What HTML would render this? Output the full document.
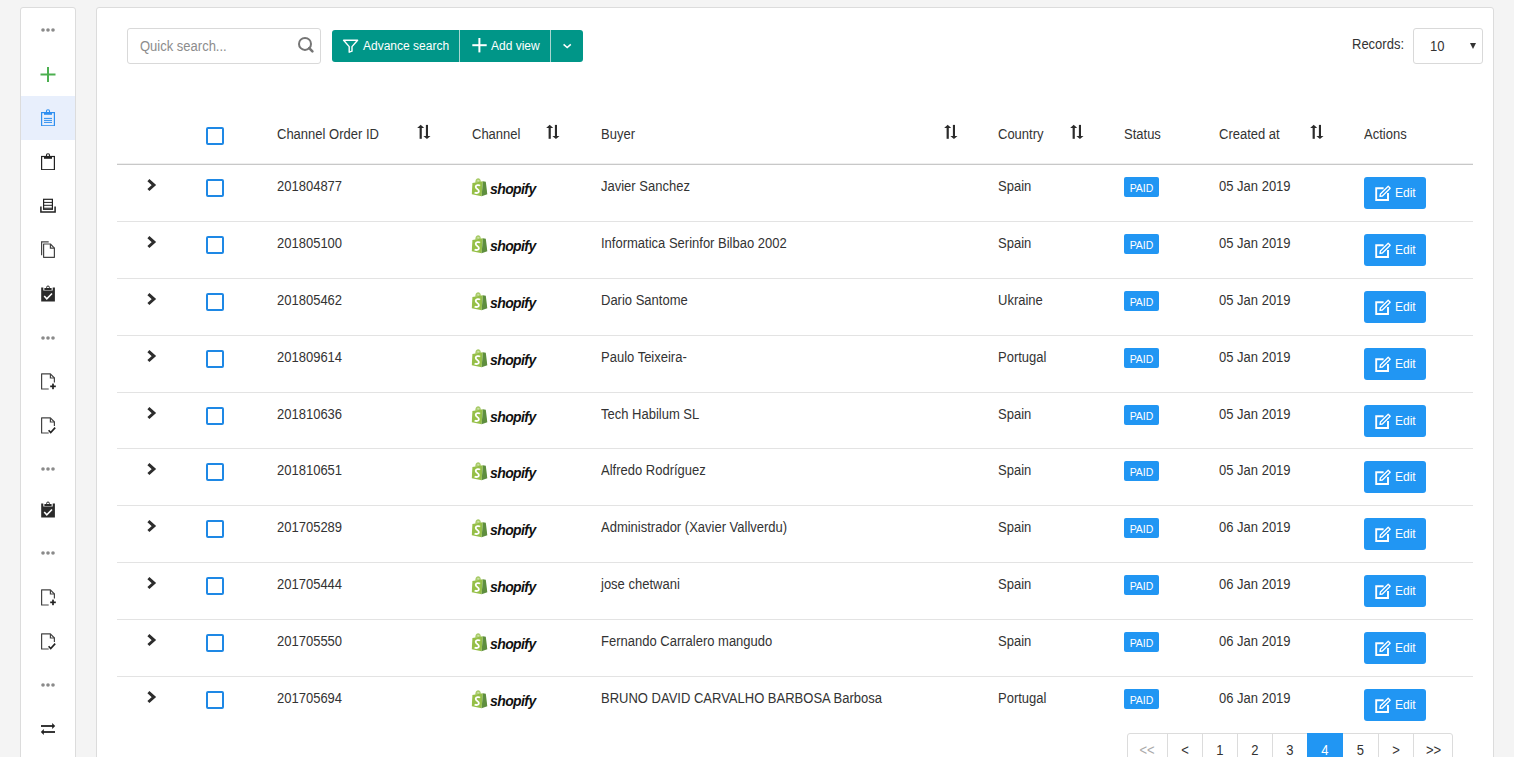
<!DOCTYPE html>
<html><head><meta charset="utf-8"><title>Orders</title>
<style>
*{margin:0;padding:0;box-sizing:border-box}
html,body{width:1514px;height:757px;overflow:hidden;background:#f4f4f4;font-family:"Liberation Sans",sans-serif;color:#333}
.sidebar{position:absolute;left:20px;top:7px;width:56px;height:800px;background:#fff;border:1px solid #dcdcdc;border-radius:3px}
.sidebar .act{position:absolute;left:0;top:88px;width:54px;height:44px;background:#e8effc}
.si{position:absolute;left:0}
.panel{position:absolute;left:96px;top:7px;width:1398px;height:800px;background:#fff;border:1px solid #dcdcdc;border-radius:3px}
.abs{position:absolute}
.search{position:absolute;left:127px;top:28px;width:194px;height:36px;border:1px solid #d9d9d9;border-radius:3px;background:#fff}
.search .ph{position:absolute;left:12px;top:10px;font-size:14px;line-height:15px;color:#8c8c8c;transform:scaleX(0.9286);transform-origin:0 0;white-space:nowrap}
.btns{position:absolute;left:332px;top:30px;width:251px;height:32px;background:#009688;border-radius:3px}
.btns .dv{position:absolute;top:0;width:1px;height:32px;background:#a8d6d1}
.btns .lbl{position:absolute;top:9px;font-size:12px;line-height:14px;color:#fff}
.rec{position:absolute;left:1352px;top:37px;font-size:14px;line-height:15px;color:#333;transform:scaleX(0.9286);transform-origin:0 0;white-space:nowrap}
.sel{position:absolute;left:1413px;top:28px;width:70px;height:36px;border:1px solid #d9d9d9;border-radius:3px;background:#fff}
.sel .v{position:absolute;left:16px;top:10px;font-size:14px;line-height:15px;color:#333;transform:scaleX(0.9286);transform-origin:0 0;white-space:nowrap}
.sel .ar{position:absolute;left:56px;top:14px;width:0;height:0;border-left:3.5px solid transparent;border-right:3.5px solid transparent;border-top:6px solid #333}
.th{position:absolute;top:127px;font-size:14px;line-height:15px;color:#333;white-space:nowrap;transform:scaleX(0.9286);transform-origin:0 0}
.sort{position:absolute;top:124px}
.hline{position:absolute;left:117px;top:164px;width:1356px;height:1px;background:#c8c8c8;box-shadow:0 -1px 0 #efefef}
.cb{position:absolute;left:206px;width:18px;height:18px;border:2px solid #1e88e5;border-radius:2px;background:#fff}
.row{position:absolute;left:0;width:1514px;height:57px}
.row .t{position:absolute;top:15px;font-size:14px;line-height:15px;color:#333;white-space:nowrap;transform:scaleX(0.9286);transform-origin:0 0}
.row .line{position:absolute;left:117px;top:57px;width:1356px;height:1px;background:#e3e3e3}
.chev{position:absolute;left:146px;top:15px}
.shop{position:absolute;left:471px;top:14px;height:20px;width:80px}
.shop .bag{position:absolute;left:0;top:0}
.shop span{position:absolute;left:19px;top:3px;font-size:14px;line-height:17px;font-weight:bold;font-style:italic;letter-spacing:-0.6px;color:#111}
.paid{position:absolute;left:1124px;top:13px;width:35px;height:20px;background:#2196f3;border-radius:2px;color:#fff;font-size:10.5px;line-height:22px;text-align:center}
.edit{position:absolute;left:1364px;top:13px;width:62px;height:32px;background:#2196f3;border-radius:3px;color:#fff}
.edit .eicon{position:absolute;left:11px;top:8px}
.edit span{position:absolute;left:31px;top:9px;font-size:12px;line-height:14px}
.pag{position:absolute;left:1127px;top:733px;height:40px;border:1px solid #dcdcdc;border-radius:3px;background:#fff}
.pg{position:absolute;top:0;height:40px;border-left:1px solid #dcdcdc;font-size:14px;line-height:15px;color:#333;text-align:center}
.pg span{position:absolute;left:0;right:0;top:9px;transform:scaleX(0.9286);transform-origin:50% 0}
</style></head><body>
<div class="sidebar"><div class="act"></div></div><svg class="si" style="top:25px" width="80" height="10" viewBox="0 0 80 10"><circle cx="43" cy="5" r="1.8" fill="#8a8a8a"/><circle cx="48" cy="5" r="1.8" fill="#8a8a8a"/><circle cx="53" cy="5" r="1.8" fill="#8a8a8a"/></svg><svg class="si" style="top:64px" width="56" height="20" viewBox="0 0 56 20"><rect x="40.5" y="9.5" width="15" height="2" fill="#4caf50"/><rect x="47" y="3" width="2" height="15" fill="#4caf50"/></svg><svg class="si" style="top:106px" width="56" height="20" viewBox="0 0 56 20"><rect x="41.6" y="6.6" width="12.8" height="13.2" fill="none" stroke="#2f8ff0" stroke-width="1.2"/><rect x="44" y="6" width="8" height="2.8" fill="#2f8ff0"/><circle cx="48" cy="5.4" r="1.6" fill="none" stroke="#2f8ff0" stroke-width="1.1"/><rect x="44" y="11.9" width="8" height="1" fill="#2f8ff0"/><rect x="44" y="13.9" width="8" height="1" fill="#2f8ff0"/><rect x="44" y="15.9" width="8" height="1" fill="#2f8ff0"/></svg><svg class="si" style="top:150px" width="56" height="20" viewBox="0 0 56 20"><rect x="41.6" y="6.5" width="12.8" height="13.2" fill="none" stroke="#222" stroke-width="1.2"/><rect x="44" y="6" width="8" height="2.8" fill="#222"/><circle cx="48" cy="5.4" r="1.6" fill="none" stroke="#222" stroke-width="1.1"/></svg><svg class="si" style="top:194px" width="56" height="20" viewBox="0 0 56 20"><rect x="43.6" y="5.3" width="8.8" height="10" fill="none" stroke="#222" stroke-width="1.2"/><rect x="44" y="7.9" width="8" height="1" fill="#222"/><rect x="44" y="10.8" width="8" height="1" fill="#222"/><rect x="44" y="13.7" width="8" height="1" fill="#222"/><path d="M40.9 12.6 V18 H55.1 V12.6" fill="none" stroke="#222" stroke-width="1.5"/></svg><svg class="si" style="top:238px" width="56" height="20" viewBox="0 0 56 20"><path d="M41.6 17.3 V3.9 H48.7" fill="none" stroke="#444" stroke-width="1.2"/><path d="M43.6 6 H50.4 L54.4 10.2 V19.3 H43.6 Z" fill="none" stroke="#444" stroke-width="1.2" stroke-linejoin="round"/><path d="M50.4 6 V10.2 H54.4" fill="none" stroke="#444" stroke-width="1.2"/></svg><svg class="si" style="top:282px" width="56" height="20" viewBox="0 0 56 20"><path d="M41.2 5.6 H43.3 V8.6 H52.7 V5.6 H54.9 V19.5 H41.2 Z" fill="#2a2a2a"/><rect x="44.4" y="6" width="7.2" height="2.1" fill="#2a2a2a"/><circle cx="48" cy="5.4" r="1.4" fill="none" stroke="#2a2a2a" stroke-width="1"/><path d="M44.2 14 L46.8 16.8 L52 11.5" fill="none" stroke="#fff" stroke-width="1.6"/></svg><svg class="si" style="top:333px" width="80" height="10" viewBox="0 0 80 10"><circle cx="43" cy="5" r="1.8" fill="#8a8a8a"/><circle cx="48" cy="5" r="1.8" fill="#8a8a8a"/><circle cx="53" cy="5" r="1.8" fill="#8a8a8a"/></svg><svg class="si" style="top:370px" width="56" height="20" viewBox="0 0 56 20"><path d="M48.7 19 H41.6 V3.9 H50.4 L54.4 8 V12.4" fill="none" stroke="#444" stroke-width="1.2" stroke-linejoin="round"/><path d="M50.4 3.9 V8 H54.4" fill="none" stroke="#444" stroke-width="1.2"/><rect x="50.2" y="15.5" width="5.6" height="1.7" fill="#222"/><rect x="52.15" y="13.6" width="1.7" height="5.6" fill="#222"/></svg><svg class="si" style="top:414px" width="56" height="20" viewBox="0 0 56 20"><path d="M48.7 19 H41.6 V3.9 H50.4 L54.4 8 V12" fill="none" stroke="#444" stroke-width="1.2" stroke-linejoin="round"/><path d="M50.4 3.9 V8 H54.4" fill="none" stroke="#444" stroke-width="1.2"/><path d="M48.6 16.3 L50.7 18.6 L55.2 13.6" fill="none" stroke="#222" stroke-width="1.6"/></svg><svg class="si" style="top:464px" width="80" height="10" viewBox="0 0 80 10"><circle cx="43" cy="5" r="1.8" fill="#8a8a8a"/><circle cx="48" cy="5" r="1.8" fill="#8a8a8a"/><circle cx="53" cy="5" r="1.8" fill="#8a8a8a"/></svg><svg class="si" style="top:498px" width="56" height="20" viewBox="0 0 56 20"><path d="M41.2 5.6 H43.3 V8.6 H52.7 V5.6 H54.9 V19.5 H41.2 Z" fill="#2a2a2a"/><rect x="44.4" y="6" width="7.2" height="2.1" fill="#2a2a2a"/><circle cx="48" cy="5.4" r="1.4" fill="none" stroke="#2a2a2a" stroke-width="1"/><path d="M44.2 14 L46.8 16.8 L52 11.5" fill="none" stroke="#fff" stroke-width="1.6"/></svg><svg class="si" style="top:548px" width="80" height="10" viewBox="0 0 80 10"><circle cx="43" cy="5" r="1.8" fill="#8a8a8a"/><circle cx="48" cy="5" r="1.8" fill="#8a8a8a"/><circle cx="53" cy="5" r="1.8" fill="#8a8a8a"/></svg><svg class="si" style="top:586px" width="56" height="20" viewBox="0 0 56 20"><path d="M48.7 19 H41.6 V3.9 H50.4 L54.4 8 V12.4" fill="none" stroke="#444" stroke-width="1.2" stroke-linejoin="round"/><path d="M50.4 3.9 V8 H54.4" fill="none" stroke="#444" stroke-width="1.2"/><rect x="50.2" y="15.5" width="5.6" height="1.7" fill="#222"/><rect x="52.15" y="13.6" width="1.7" height="5.6" fill="#222"/></svg><svg class="si" style="top:630px" width="56" height="20" viewBox="0 0 56 20"><path d="M48.7 19 H41.6 V3.9 H50.4 L54.4 8 V12" fill="none" stroke="#444" stroke-width="1.2" stroke-linejoin="round"/><path d="M50.4 3.9 V8 H54.4" fill="none" stroke="#444" stroke-width="1.2"/><path d="M48.6 16.3 L50.7 18.6 L55.2 13.6" fill="none" stroke="#222" stroke-width="1.6"/></svg><svg class="si" style="top:680px" width="80" height="10" viewBox="0 0 80 10"><circle cx="43" cy="5" r="1.8" fill="#8a8a8a"/><circle cx="48" cy="5" r="1.8" fill="#8a8a8a"/><circle cx="53" cy="5" r="1.8" fill="#8a8a8a"/></svg><svg class="si" style="top:716px" width="56" height="20" viewBox="0 0 56 20"><rect x="41" y="9.1" width="12" height="1.8" fill="#222"/><path d="M52.2 7 L55.2 10 L52.2 13 Z" fill="#222"/><rect x="43" y="15.1" width="12" height="1.8" fill="#222"/><path d="M43.8 13 L40.8 16 L43.8 19 Z" fill="#222"/></svg>
<div class="panel"></div>
<div class="search"><div class="ph">Quick search...</div>
<svg class="abs" style="left:168px;top:6px" width="20" height="20" viewBox="0 0 20 20"><circle cx="9.0" cy="8.9" r="6.0" fill="none" stroke="#757575" stroke-width="2"/><path d="M13.2 13.1 L16.4 16.3" stroke="#757575" stroke-width="2.6" stroke-linecap="round"/></svg>
</div>
<div class="btns">
<svg class="abs" style="left:10px;top:9px" width="17" height="14" viewBox="0 0 17 14"><path d="M1.6 1.2 H15.6 L10 7.6 V12.2 L7.2 13.2 V7.6 Z" fill="none" stroke="#fff" stroke-width="1.4" stroke-linejoin="round"/></svg>
<div class="lbl" style="left:31px">Advance search</div>
<div class="dv" style="left:127px"></div>
<svg class="abs" style="left:140px;top:8px" width="15" height="15" viewBox="0 0 15 15"><rect x="0.3" y="6.2" width="14.4" height="2" fill="#fff"/><rect x="6.4" y="0" width="2" height="14.4" fill="#fff"/></svg>
<div class="lbl" style="left:159px">Add view</div>
<div class="dv" style="left:218px"></div>
<svg class="abs" style="left:230px;top:13px" width="10" height="6" viewBox="0 0 10 6"><path d="M1.6 1.4 L5.2 4.6 L8.8 1.4" fill="none" stroke="#fff" stroke-width="1.5"/></svg>
</div>
<div class="rec">Records:</div>
<div class="sel"><div class="v">10</div><div class="ar"></div></div>

<div class="cb" style="top:127px"></div>
<div class="th" style="left:277px">Channel Order ID</div>
<div class="th" style="left:472px">Channel</div>
<div class="th" style="left:601px">Buyer</div>
<div class="th" style="left:998px">Country</div>
<div class="th" style="left:1124px">Status</div>
<div class="th" style="left:1219px">Created at</div>
<div class="th" style="left:1364px">Actions</div>
<svg class="sort" style="left:417px" width="14" height="16" viewBox="0 0 14 16"><path d="M0.2 4 L3.7 0.8 L7.2 4 Z" fill="#2b2b2b"/><rect x="2.6" y="3.6" width="2.2" height="11.2" fill="#2b2b2b"/><rect x="8.9" y="0.9" width="2.1" height="11.4" fill="#2b2b2b"/><path d="M6.4 12 L13.5 12 L9.95 15.1 Z" fill="#2b2b2b"/></svg><svg class="sort" style="left:546px" width="14" height="16" viewBox="0 0 14 16"><path d="M0.2 4 L3.7 0.8 L7.2 4 Z" fill="#2b2b2b"/><rect x="2.6" y="3.6" width="2.2" height="11.2" fill="#2b2b2b"/><rect x="8.9" y="0.9" width="2.1" height="11.4" fill="#2b2b2b"/><path d="M6.4 12 L13.5 12 L9.95 15.1 Z" fill="#2b2b2b"/></svg><svg class="sort" style="left:944px" width="14" height="16" viewBox="0 0 14 16"><path d="M0.2 4 L3.7 0.8 L7.2 4 Z" fill="#2b2b2b"/><rect x="2.6" y="3.6" width="2.2" height="11.2" fill="#2b2b2b"/><rect x="8.9" y="0.9" width="2.1" height="11.4" fill="#2b2b2b"/><path d="M6.4 12 L13.5 12 L9.95 15.1 Z" fill="#2b2b2b"/></svg><svg class="sort" style="left:1070px" width="14" height="16" viewBox="0 0 14 16"><path d="M0.2 4 L3.7 0.8 L7.2 4 Z" fill="#2b2b2b"/><rect x="2.6" y="3.6" width="2.2" height="11.2" fill="#2b2b2b"/><rect x="8.9" y="0.9" width="2.1" height="11.4" fill="#2b2b2b"/><path d="M6.4 12 L13.5 12 L9.95 15.1 Z" fill="#2b2b2b"/></svg><svg class="sort" style="left:1310px" width="14" height="16" viewBox="0 0 14 16"><path d="M0.2 4 L3.7 0.8 L7.2 4 Z" fill="#2b2b2b"/><rect x="2.6" y="3.6" width="2.2" height="11.2" fill="#2b2b2b"/><rect x="8.9" y="0.9" width="2.1" height="11.4" fill="#2b2b2b"/><path d="M6.4 12 L13.5 12 L9.95 15.1 Z" fill="#2b2b2b"/></svg>
<div class="hline"></div>
<div class="row" style="top:164px"><svg class="chev" width="12" height="14" viewBox="0 0 12 14"><path d="M2.4 1.2 L7.9 6.1 L2.4 11" fill="none" stroke="#2d2d2d" stroke-width="3" stroke-linejoin="miter" stroke-miterlimit="4"/></svg><div class="cb" style="top:15px"></div><div class="t" style="left:277px">201804877</div><div class="shop"><svg class="bag" width="18" height="20" viewBox="0 0 18 20"><path d="M4.2 4.8 C4.2 1.6 5.6 0.3 7.2 0.3 C8.8 0.3 9.8 1.6 9.8 4 Z" fill="#a9cc6a"/><ellipse cx="7.3" cy="2.8" rx="1.3" ry="0.6" fill="#dcebc4"/><path d="M1.4 4.9 L11.9 3.3 L10.6 18.2 L0.8 16.3 Z" fill="#95bf47"/><path d="M11.9 3.3 L14.8 3.8 L16.3 16.3 L10.6 18.2 Z" fill="#5e8e3e"/><path d="M9.0 7.7 C8.0 6.8 4.8 6.7 4.7 8.9 C4.6 10.9 8.0 10.9 7.9 13.1 C7.8 15.2 5.0 15.4 3.6 14.5" fill="none" stroke="#fff" stroke-width="1.8"/></svg><span>shopify</span></div><div class="t" style="left:601px">Javier Sanchez</div><div class="t" style="left:998px">Spain</div><div class="paid">PAID</div><div class="t" style="left:1219px">05 Jan 2019</div><div class="edit"><svg class="eicon" width="16" height="16" viewBox="0 0 16 16"><path d="M8.6 3.2 H1.2 V15 H13 V8" fill="none" stroke="#fff" stroke-width="1.9"/><path d="M5 11.4 L5.4 9 L13.2 1.2 L15.2 3.2 L7.4 11 Z" fill="none" stroke="#fff" stroke-width="1.3" stroke-linejoin="round"/></svg><span>Edit</span></div><div class="line" style="top:57px"></div></div><div class="row" style="top:221px"><svg class="chev" width="12" height="14" viewBox="0 0 12 14"><path d="M2.4 1.2 L7.9 6.1 L2.4 11" fill="none" stroke="#2d2d2d" stroke-width="3" stroke-linejoin="miter" stroke-miterlimit="4"/></svg><div class="cb" style="top:15px"></div><div class="t" style="left:277px">201805100</div><div class="shop"><svg class="bag" width="18" height="20" viewBox="0 0 18 20"><path d="M4.2 4.8 C4.2 1.6 5.6 0.3 7.2 0.3 C8.8 0.3 9.8 1.6 9.8 4 Z" fill="#a9cc6a"/><ellipse cx="7.3" cy="2.8" rx="1.3" ry="0.6" fill="#dcebc4"/><path d="M1.4 4.9 L11.9 3.3 L10.6 18.2 L0.8 16.3 Z" fill="#95bf47"/><path d="M11.9 3.3 L14.8 3.8 L16.3 16.3 L10.6 18.2 Z" fill="#5e8e3e"/><path d="M9.0 7.7 C8.0 6.8 4.8 6.7 4.7 8.9 C4.6 10.9 8.0 10.9 7.9 13.1 C7.8 15.2 5.0 15.4 3.6 14.5" fill="none" stroke="#fff" stroke-width="1.8"/></svg><span>shopify</span></div><div class="t" style="left:601px">Informatica Serinfor Bilbao 2002</div><div class="t" style="left:998px">Spain</div><div class="paid">PAID</div><div class="t" style="left:1219px">05 Jan 2019</div><div class="edit"><svg class="eicon" width="16" height="16" viewBox="0 0 16 16"><path d="M8.6 3.2 H1.2 V15 H13 V8" fill="none" stroke="#fff" stroke-width="1.9"/><path d="M5 11.4 L5.4 9 L13.2 1.2 L15.2 3.2 L7.4 11 Z" fill="none" stroke="#fff" stroke-width="1.3" stroke-linejoin="round"/></svg><span>Edit</span></div><div class="line" style="top:57px"></div></div><div class="row" style="top:278px"><svg class="chev" width="12" height="14" viewBox="0 0 12 14"><path d="M2.4 1.2 L7.9 6.1 L2.4 11" fill="none" stroke="#2d2d2d" stroke-width="3" stroke-linejoin="miter" stroke-miterlimit="4"/></svg><div class="cb" style="top:15px"></div><div class="t" style="left:277px">201805462</div><div class="shop"><svg class="bag" width="18" height="20" viewBox="0 0 18 20"><path d="M4.2 4.8 C4.2 1.6 5.6 0.3 7.2 0.3 C8.8 0.3 9.8 1.6 9.8 4 Z" fill="#a9cc6a"/><ellipse cx="7.3" cy="2.8" rx="1.3" ry="0.6" fill="#dcebc4"/><path d="M1.4 4.9 L11.9 3.3 L10.6 18.2 L0.8 16.3 Z" fill="#95bf47"/><path d="M11.9 3.3 L14.8 3.8 L16.3 16.3 L10.6 18.2 Z" fill="#5e8e3e"/><path d="M9.0 7.7 C8.0 6.8 4.8 6.7 4.7 8.9 C4.6 10.9 8.0 10.9 7.9 13.1 C7.8 15.2 5.0 15.4 3.6 14.5" fill="none" stroke="#fff" stroke-width="1.8"/></svg><span>shopify</span></div><div class="t" style="left:601px">Dario Santome</div><div class="t" style="left:998px">Ukraine</div><div class="paid">PAID</div><div class="t" style="left:1219px">05 Jan 2019</div><div class="edit"><svg class="eicon" width="16" height="16" viewBox="0 0 16 16"><path d="M8.6 3.2 H1.2 V15 H13 V8" fill="none" stroke="#fff" stroke-width="1.9"/><path d="M5 11.4 L5.4 9 L13.2 1.2 L15.2 3.2 L7.4 11 Z" fill="none" stroke="#fff" stroke-width="1.3" stroke-linejoin="round"/></svg><span>Edit</span></div><div class="line" style="top:57px"></div></div><div class="row" style="top:335px"><svg class="chev" width="12" height="14" viewBox="0 0 12 14"><path d="M2.4 1.2 L7.9 6.1 L2.4 11" fill="none" stroke="#2d2d2d" stroke-width="3" stroke-linejoin="miter" stroke-miterlimit="4"/></svg><div class="cb" style="top:15px"></div><div class="t" style="left:277px">201809614</div><div class="shop"><svg class="bag" width="18" height="20" viewBox="0 0 18 20"><path d="M4.2 4.8 C4.2 1.6 5.6 0.3 7.2 0.3 C8.8 0.3 9.8 1.6 9.8 4 Z" fill="#a9cc6a"/><ellipse cx="7.3" cy="2.8" rx="1.3" ry="0.6" fill="#dcebc4"/><path d="M1.4 4.9 L11.9 3.3 L10.6 18.2 L0.8 16.3 Z" fill="#95bf47"/><path d="M11.9 3.3 L14.8 3.8 L16.3 16.3 L10.6 18.2 Z" fill="#5e8e3e"/><path d="M9.0 7.7 C8.0 6.8 4.8 6.7 4.7 8.9 C4.6 10.9 8.0 10.9 7.9 13.1 C7.8 15.2 5.0 15.4 3.6 14.5" fill="none" stroke="#fff" stroke-width="1.8"/></svg><span>shopify</span></div><div class="t" style="left:601px">Paulo Teixeira-</div><div class="t" style="left:998px">Portugal</div><div class="paid">PAID</div><div class="t" style="left:1219px">05 Jan 2019</div><div class="edit"><svg class="eicon" width="16" height="16" viewBox="0 0 16 16"><path d="M8.6 3.2 H1.2 V15 H13 V8" fill="none" stroke="#fff" stroke-width="1.9"/><path d="M5 11.4 L5.4 9 L13.2 1.2 L15.2 3.2 L7.4 11 Z" fill="none" stroke="#fff" stroke-width="1.3" stroke-linejoin="round"/></svg><span>Edit</span></div><div class="line" style="top:57px"></div></div><div class="row" style="top:392px"><svg class="chev" width="12" height="14" viewBox="0 0 12 14"><path d="M2.4 1.2 L7.9 6.1 L2.4 11" fill="none" stroke="#2d2d2d" stroke-width="3" stroke-linejoin="miter" stroke-miterlimit="4"/></svg><div class="cb" style="top:15px"></div><div class="t" style="left:277px">201810636</div><div class="shop"><svg class="bag" width="18" height="20" viewBox="0 0 18 20"><path d="M4.2 4.8 C4.2 1.6 5.6 0.3 7.2 0.3 C8.8 0.3 9.8 1.6 9.8 4 Z" fill="#a9cc6a"/><ellipse cx="7.3" cy="2.8" rx="1.3" ry="0.6" fill="#dcebc4"/><path d="M1.4 4.9 L11.9 3.3 L10.6 18.2 L0.8 16.3 Z" fill="#95bf47"/><path d="M11.9 3.3 L14.8 3.8 L16.3 16.3 L10.6 18.2 Z" fill="#5e8e3e"/><path d="M9.0 7.7 C8.0 6.8 4.8 6.7 4.7 8.9 C4.6 10.9 8.0 10.9 7.9 13.1 C7.8 15.2 5.0 15.4 3.6 14.5" fill="none" stroke="#fff" stroke-width="1.8"/></svg><span>shopify</span></div><div class="t" style="left:601px">Tech Habilum SL</div><div class="t" style="left:998px">Spain</div><div class="paid">PAID</div><div class="t" style="left:1219px">05 Jan 2019</div><div class="edit"><svg class="eicon" width="16" height="16" viewBox="0 0 16 16"><path d="M8.6 3.2 H1.2 V15 H13 V8" fill="none" stroke="#fff" stroke-width="1.9"/><path d="M5 11.4 L5.4 9 L13.2 1.2 L15.2 3.2 L7.4 11 Z" fill="none" stroke="#fff" stroke-width="1.3" stroke-linejoin="round"/></svg><span>Edit</span></div><div class="line" style="top:56px"></div></div><div class="row" style="top:448px"><svg class="chev" width="12" height="14" viewBox="0 0 12 14"><path d="M2.4 1.2 L7.9 6.1 L2.4 11" fill="none" stroke="#2d2d2d" stroke-width="3" stroke-linejoin="miter" stroke-miterlimit="4"/></svg><div class="cb" style="top:15px"></div><div class="t" style="left:277px">201810651</div><div class="shop"><svg class="bag" width="18" height="20" viewBox="0 0 18 20"><path d="M4.2 4.8 C4.2 1.6 5.6 0.3 7.2 0.3 C8.8 0.3 9.8 1.6 9.8 4 Z" fill="#a9cc6a"/><ellipse cx="7.3" cy="2.8" rx="1.3" ry="0.6" fill="#dcebc4"/><path d="M1.4 4.9 L11.9 3.3 L10.6 18.2 L0.8 16.3 Z" fill="#95bf47"/><path d="M11.9 3.3 L14.8 3.8 L16.3 16.3 L10.6 18.2 Z" fill="#5e8e3e"/><path d="M9.0 7.7 C8.0 6.8 4.8 6.7 4.7 8.9 C4.6 10.9 8.0 10.9 7.9 13.1 C7.8 15.2 5.0 15.4 3.6 14.5" fill="none" stroke="#fff" stroke-width="1.8"/></svg><span>shopify</span></div><div class="t" style="left:601px">Alfredo Rodríguez</div><div class="t" style="left:998px">Spain</div><div class="paid">PAID</div><div class="t" style="left:1219px">05 Jan 2019</div><div class="edit"><svg class="eicon" width="16" height="16" viewBox="0 0 16 16"><path d="M8.6 3.2 H1.2 V15 H13 V8" fill="none" stroke="#fff" stroke-width="1.9"/><path d="M5 11.4 L5.4 9 L13.2 1.2 L15.2 3.2 L7.4 11 Z" fill="none" stroke="#fff" stroke-width="1.3" stroke-linejoin="round"/></svg><span>Edit</span></div><div class="line" style="top:57px"></div></div><div class="row" style="top:505px"><svg class="chev" width="12" height="14" viewBox="0 0 12 14"><path d="M2.4 1.2 L7.9 6.1 L2.4 11" fill="none" stroke="#2d2d2d" stroke-width="3" stroke-linejoin="miter" stroke-miterlimit="4"/></svg><div class="cb" style="top:15px"></div><div class="t" style="left:277px">201705289</div><div class="shop"><svg class="bag" width="18" height="20" viewBox="0 0 18 20"><path d="M4.2 4.8 C4.2 1.6 5.6 0.3 7.2 0.3 C8.8 0.3 9.8 1.6 9.8 4 Z" fill="#a9cc6a"/><ellipse cx="7.3" cy="2.8" rx="1.3" ry="0.6" fill="#dcebc4"/><path d="M1.4 4.9 L11.9 3.3 L10.6 18.2 L0.8 16.3 Z" fill="#95bf47"/><path d="M11.9 3.3 L14.8 3.8 L16.3 16.3 L10.6 18.2 Z" fill="#5e8e3e"/><path d="M9.0 7.7 C8.0 6.8 4.8 6.7 4.7 8.9 C4.6 10.9 8.0 10.9 7.9 13.1 C7.8 15.2 5.0 15.4 3.6 14.5" fill="none" stroke="#fff" stroke-width="1.8"/></svg><span>shopify</span></div><div class="t" style="left:601px">Administrador (Xavier Vallverdu)</div><div class="t" style="left:998px">Spain</div><div class="paid">PAID</div><div class="t" style="left:1219px">06 Jan 2019</div><div class="edit"><svg class="eicon" width="16" height="16" viewBox="0 0 16 16"><path d="M8.6 3.2 H1.2 V15 H13 V8" fill="none" stroke="#fff" stroke-width="1.9"/><path d="M5 11.4 L5.4 9 L13.2 1.2 L15.2 3.2 L7.4 11 Z" fill="none" stroke="#fff" stroke-width="1.3" stroke-linejoin="round"/></svg><span>Edit</span></div><div class="line" style="top:57px"></div></div><div class="row" style="top:562px"><svg class="chev" width="12" height="14" viewBox="0 0 12 14"><path d="M2.4 1.2 L7.9 6.1 L2.4 11" fill="none" stroke="#2d2d2d" stroke-width="3" stroke-linejoin="miter" stroke-miterlimit="4"/></svg><div class="cb" style="top:15px"></div><div class="t" style="left:277px">201705444</div><div class="shop"><svg class="bag" width="18" height="20" viewBox="0 0 18 20"><path d="M4.2 4.8 C4.2 1.6 5.6 0.3 7.2 0.3 C8.8 0.3 9.8 1.6 9.8 4 Z" fill="#a9cc6a"/><ellipse cx="7.3" cy="2.8" rx="1.3" ry="0.6" fill="#dcebc4"/><path d="M1.4 4.9 L11.9 3.3 L10.6 18.2 L0.8 16.3 Z" fill="#95bf47"/><path d="M11.9 3.3 L14.8 3.8 L16.3 16.3 L10.6 18.2 Z" fill="#5e8e3e"/><path d="M9.0 7.7 C8.0 6.8 4.8 6.7 4.7 8.9 C4.6 10.9 8.0 10.9 7.9 13.1 C7.8 15.2 5.0 15.4 3.6 14.5" fill="none" stroke="#fff" stroke-width="1.8"/></svg><span>shopify</span></div><div class="t" style="left:601px">jose chetwani</div><div class="t" style="left:998px">Spain</div><div class="paid">PAID</div><div class="t" style="left:1219px">06 Jan 2019</div><div class="edit"><svg class="eicon" width="16" height="16" viewBox="0 0 16 16"><path d="M8.6 3.2 H1.2 V15 H13 V8" fill="none" stroke="#fff" stroke-width="1.9"/><path d="M5 11.4 L5.4 9 L13.2 1.2 L15.2 3.2 L7.4 11 Z" fill="none" stroke="#fff" stroke-width="1.3" stroke-linejoin="round"/></svg><span>Edit</span></div><div class="line" style="top:57px"></div></div><div class="row" style="top:619px"><svg class="chev" width="12" height="14" viewBox="0 0 12 14"><path d="M2.4 1.2 L7.9 6.1 L2.4 11" fill="none" stroke="#2d2d2d" stroke-width="3" stroke-linejoin="miter" stroke-miterlimit="4"/></svg><div class="cb" style="top:15px"></div><div class="t" style="left:277px">201705550</div><div class="shop"><svg class="bag" width="18" height="20" viewBox="0 0 18 20"><path d="M4.2 4.8 C4.2 1.6 5.6 0.3 7.2 0.3 C8.8 0.3 9.8 1.6 9.8 4 Z" fill="#a9cc6a"/><ellipse cx="7.3" cy="2.8" rx="1.3" ry="0.6" fill="#dcebc4"/><path d="M1.4 4.9 L11.9 3.3 L10.6 18.2 L0.8 16.3 Z" fill="#95bf47"/><path d="M11.9 3.3 L14.8 3.8 L16.3 16.3 L10.6 18.2 Z" fill="#5e8e3e"/><path d="M9.0 7.7 C8.0 6.8 4.8 6.7 4.7 8.9 C4.6 10.9 8.0 10.9 7.9 13.1 C7.8 15.2 5.0 15.4 3.6 14.5" fill="none" stroke="#fff" stroke-width="1.8"/></svg><span>shopify</span></div><div class="t" style="left:601px">Fernando Carralero mangudo</div><div class="t" style="left:998px">Spain</div><div class="paid">PAID</div><div class="t" style="left:1219px">06 Jan 2019</div><div class="edit"><svg class="eicon" width="16" height="16" viewBox="0 0 16 16"><path d="M8.6 3.2 H1.2 V15 H13 V8" fill="none" stroke="#fff" stroke-width="1.9"/><path d="M5 11.4 L5.4 9 L13.2 1.2 L15.2 3.2 L7.4 11 Z" fill="none" stroke="#fff" stroke-width="1.3" stroke-linejoin="round"/></svg><span>Edit</span></div><div class="line" style="top:57px"></div></div><div class="row" style="top:676px"><svg class="chev" width="12" height="14" viewBox="0 0 12 14"><path d="M2.4 1.2 L7.9 6.1 L2.4 11" fill="none" stroke="#2d2d2d" stroke-width="3" stroke-linejoin="miter" stroke-miterlimit="4"/></svg><div class="cb" style="top:15px"></div><div class="t" style="left:277px">201705694</div><div class="shop"><svg class="bag" width="18" height="20" viewBox="0 0 18 20"><path d="M4.2 4.8 C4.2 1.6 5.6 0.3 7.2 0.3 C8.8 0.3 9.8 1.6 9.8 4 Z" fill="#a9cc6a"/><ellipse cx="7.3" cy="2.8" rx="1.3" ry="0.6" fill="#dcebc4"/><path d="M1.4 4.9 L11.9 3.3 L10.6 18.2 L0.8 16.3 Z" fill="#95bf47"/><path d="M11.9 3.3 L14.8 3.8 L16.3 16.3 L10.6 18.2 Z" fill="#5e8e3e"/><path d="M9.0 7.7 C8.0 6.8 4.8 6.7 4.7 8.9 C4.6 10.9 8.0 10.9 7.9 13.1 C7.8 15.2 5.0 15.4 3.6 14.5" fill="none" stroke="#fff" stroke-width="1.8"/></svg><span>shopify</span></div><div class="t" style="left:601px">BRUNO DAVID CARVALHO BARBOSA Barbosa</div><div class="t" style="left:998px">Portugal</div><div class="paid">PAID</div><div class="t" style="left:1219px">06 Jan 2019</div><div class="edit"><svg class="eicon" width="16" height="16" viewBox="0 0 16 16"><path d="M8.6 3.2 H1.2 V15 H13 V8" fill="none" stroke="#fff" stroke-width="1.9"/><path d="M5 11.4 L5.4 9 L13.2 1.2 L15.2 3.2 L7.4 11 Z" fill="none" stroke="#fff" stroke-width="1.3" stroke-linejoin="round"/></svg><span>Edit</span></div></div>
<div class="pag" style="width:326px">
<div class="pg" style="left:-1px;width:40px;border-left:none;color:#aaa"><span>&lt;&lt;</span></div>
<div class="pg" style="left:39px;width:35px"><span>&lt;</span></div>
<div class="pg" style="left:74px;width:35px"><span>1</span></div>
<div class="pg" style="left:109px;width:35px"><span>2</span></div>
<div class="pg" style="left:144px;width:35px"><span>3</span></div>
<div class="pg" style="left:179px;width:36px;background:#2196f3;border-left:none;color:#fff;top:-1px;height:41px"><span style="top:10px">4</span></div>
<div class="pg" style="left:215px;width:35px;border-left:none"><span>5</span></div>
<div class="pg" style="left:250px;width:35px"><span>&gt;</span></div>
<div class="pg" style="left:285px;width:40px"><span>&gt;&gt;</span></div>
</div>
</body></html>
